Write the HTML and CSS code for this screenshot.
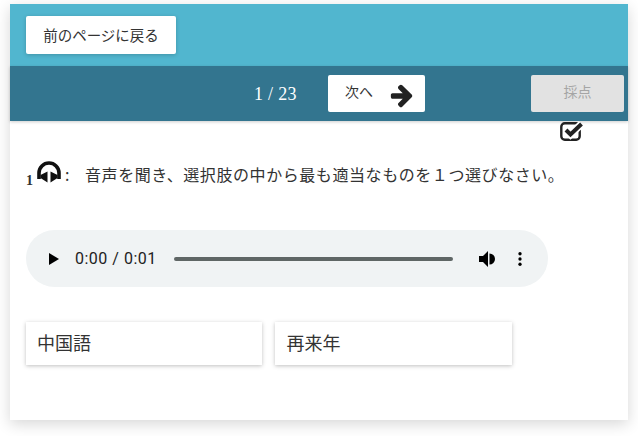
FILE: index.html
```html
<!DOCTYPE html>
<html lang="ja">
<head>
  <meta charset="UTF-8">
  <title>問題</title>
  <link rel="stylesheet" href="styles.css">
</head>
<body>
  <div class="card">
    <header class="top-bar">
      <button class="button back-button">前のページに戻る</button>
    </header>
    <nav class="nav-bar">
      <span class="page-count">1 / 23</span>
      <button class="button next-button">
        <span class="next-label">次へ</span>
        <svg class="arrow-icon" viewBox="0 0 1792 1792"><path d="M1600 960q0 54-37 91l-651 651q-39 37-91 37-51 0-90-37l-75-75q-38-38-38-91t38-91l293-293h-704q-52 0-84.5-37.5t-32.5-90.5v-128q0-53 32.5-90.5t84.5-37.5h704l-293-294q-38-36-38-90t38-90l75-75q38-38 90-38 53 0 91 38l651 651q37 35 37 90z"/></svg>
      </button>
      <button class="button score-button">採点</button>
    </nav>

    <div class="check-row">
      <svg class="check-icon" viewBox="0 0 24 20">
        <rect x="1.300" y="2.300" width="18.400" height="16.400" rx="3.500" fill="none" stroke="#222" stroke-width="2.400"/>
        <path d="M6 9l4.500 4.500L21.500 3" fill="none" stroke="#fff" stroke-width="7.500"/>
        <path d="M6 9l4.500 4.500L21.500 3" fill="none" stroke="#222" stroke-width="4"/>
      </svg>
    </div>

    <p class="question">
      <span class="question-no">1</span>
      <svg class="headphones-icon" viewBox="0 0 26 22">
        <path d="M3 18v-6a10 10 0 0 1 20 0v6" fill="none" stroke="#111" stroke-width="3.600"/>
        <path d="M11.500 10.500v11L4.500 17v-3zM14.500 10.500v11l7-4.500v-3z" fill="#111"/>
      </svg>
      <span class="question-colon">:</span>
      <span>音声を聞き、選択肢の中から最も適当なものを１つ選びなさい。</span>
    </p>

    <div class="player">
      <svg class="play-icon" viewBox="0 0 10 12"><path d="M0 0l10 6-10 6z"/></svg>
      <span class="time">0:00 / 0:01</span>
      <div class="track"></div>
      <svg class="volume-icon" viewBox="0 0 18 18"><path d="M1 6v6h4l5 5V1L5 6z"/><path d="M11.500 3.500v11a5.500 5.500 0 0 0 0-11z"/></svg>
      <svg class="menu-icon" viewBox="0 0 4 16"><circle cx="2" cy="2" r="1.900"/><circle cx="2" cy="8" r="1.900"/><circle cx="2" cy="14" r="1.900"/></svg>
    </div>

    <div class="choices">
      <div class="choice">中国語</div>
      <div class="choice">再来年</div>
    </div>
  </div>
</body>
</html>
```

FILE: styles.css
```css
body {
  margin: 0;
  padding: 4px 10px 16px;
  background-color: #fff;
  color: #333;
  font-family: "Noto Sans CJK JP", "Noto Sans", sans-serif;
}
.card {
  height: 416px;
  background-color: #fff;
  box-shadow: 0 4px 14px rgba(0,0,0,0.16);
}
.top-bar {
  height: 62px;
  box-sizing: border-box;
  padding: 12px 16px;
  background-color: #51b6cf;
}
.button {
  height: 38px;
  padding: 0;
  border: none;
  border-radius: 2px;
  background-color: #fff;
  color: #333;
  font-family: inherit;
  font-size: 14px;
  box-shadow: 0 1px 4px rgba(0,0,0,0.2);
}
.back-button {
  width: 150px;
  padding-bottom: 2px;
  font-size: 14.5px;
}
.nav-bar {
  display: flex;
  align-items: center;
  height: 55px;
  box-sizing: border-box;
  padding: 0 4px 1px 244px;
  background-color: #33758f;
  box-shadow: 0 1px 3px rgba(0,0,0,0.2);
}
.page-count {
  width: 74px;
  margin-top: 3px;
  color: #fff;
  font-family: "Liberation Serif", serif;
  font-size: 18px;
  letter-spacing: 0.3px;
}
.next-button {
  display: flex;
  align-items: center;
  gap: 16px;
  width: 97px;
  height: 37px;
  padding-left: 17px;
  box-shadow: none;
}
.next-label {
  margin-top: -4px;
}
.arrow-icon {
  width: 26px;
  height: 26px;
  margin-top: 4px;
  fill: #222;
}
.score-button {
  width: 93px;
  height: 37px;
  margin-left: auto;
  padding-bottom: 4px;
  background-color: #e2e2e2;
  color: #a5a5a5;
  box-shadow: none;
}
.check-row {
  display: flex;
  justify-content: flex-end;
  height: 21px;
  padding-right: 44px;
}
.check-icon {
  width: 24px;
  height: 20px;
}
.question {
  display: flex;
  align-items: center;
  height: 30px;
  margin: 17px 0 0;
  padding-left: 16px;
  font-size: 16px;
  letter-spacing: 0.57px;
  color: #333;
}
.question-no {
  align-self: flex-end;
  width: 10px;
  font-family: "Liberation Serif", serif;
  font-size: 14px;
  font-weight: bold;
  letter-spacing: 0;
}
.headphones-icon {
  width: 26px;
  height: 22px;
  margin-top: -4px;
}
.question-colon {
  width: 23px;
  padding-left: 3px;
  box-sizing: border-box;
}
.player {
  display: flex;
  align-items: center;
  width: 522px;
  height: 57px;
  box-sizing: border-box;
  margin: 41px 0 0 16px;
  padding: 0 26px 0 23px;
  border-radius: 29px;
  background-color: #f0f3f4;
  color: #222;
}
.play-icon {
  width: 10px;
  height: 12px;
  flex: none;
}
.time {
  margin-left: 16px;
  font-family: Roboto, sans-serif;
  font-size: 16px;
  letter-spacing: 0.5px;
  white-space: nowrap;
}
.track {
  flex: 1;
  height: 4px;
  margin: 0 25px 0 17px;
  border-radius: 2px;
  background-color: #5f6665;
}
.volume-icon {
  width: 18px;
  height: 18px;
  flex: none;
}
.menu-icon {
  width: 4px;
  height: 14px;
  flex: none;
  margin-left: 22px;
}
.choices {
  display: flex;
  gap: 13px;
  margin: 35px 0 0 16px;
}
.choice {
  width: 236.400px;
  height: 43px;
  box-sizing: border-box;
  padding: 0 11px;
  line-height: 41px;
  font-size: 18px;
  color: #333;
  background-color: #fff;
  box-shadow: 0 1px 4px rgba(0,0,0,0.25);
}
```
